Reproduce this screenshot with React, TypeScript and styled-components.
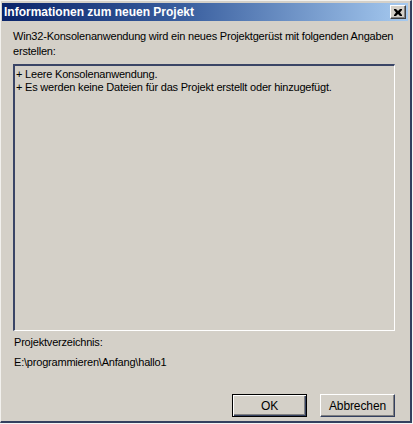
import React from "react";
import styled, { createGlobalStyle } from "styled-components";

const Global = createGlobalStyle`
  html, body { margin: 0; padding: 0; background: #f4f4f4; }
  body { width: 413px; height: 424px; overflow: hidden; }
`;

const Window = styled.div`
  box-sizing: border-box;
  width: 412px;
  height: 423px;
  background: #d4d0c8;
  border-top: 1px solid #f2f1ee;
  border-left: 1px solid #f2f1ee;
  border-right: 2px solid #34405f;
  border-bottom: 2px solid #34405f;
  padding: 2px 2px 0 1px;
  display: flex;
  flex-direction: column;
  font-family: "Liberation Sans", Arial, sans-serif;
  font-size: 11px;
  letter-spacing: -0.2px;
  color: #000;
`;

const TitleBar = styled.div`
  height: 18px;
  display: flex;
  align-items: center;
  justify-content: space-between;
  padding: 0 2px 0 2px;
  background: linear-gradient(to right, #0a246a 0%, #3a5f9f 45%, #a6caf0 100%);
`;

const TitleText = styled.span`
  color: #fff;
  font-weight: bold;
  font-size: 12px;
  letter-spacing: 0;
`;

const CloseButton = styled.div`
  box-sizing: border-box;
  width: 16px;
  height: 14px;
  background: #d4d0c8;
  border-top: 1px solid #fff;
  border-left: 1px solid #fff;
  border-right: 1px solid #404040;
  border-bottom: 1px solid #404040;
  box-shadow: inset -1px -1px 0 #808080;
  display: flex;
  align-items: center;
  justify-content: center;
`;

const Content = styled.div`
  flex: 1;
  display: flex;
  flex-direction: column;
  padding: 8px 13px 0 11px;
`;

const Intro = styled.p`
  margin: 0;
  line-height: 15px;
`;

const InfoBox = styled.div`
  box-sizing: border-box;
  margin-top: 5px;
  width: 382px;
  height: 267px;
  background: #d4d0c8;
  border-top: 2px solid #3a4566;
  border-left: 2px solid #3a4566;
  border-right: 1px solid #fff;
  border-bottom: 1px solid #fff;
  padding: 2px 0 0 1px;
`;

const InfoLine = styled.div`
  line-height: 13px;
`;

const Label = styled.div`
  margin-top: 4px;
  line-height: 15px;
  padding-left: 1px;
`;

const PathText = styled.div`
  margin-top: 5px;
  line-height: 15px;
  padding-left: 1px;
`;

const ButtonRow = styled.div`
  margin-top: auto;
  margin-bottom: 4px;
  display: flex;
  justify-content: flex-end;
  gap: 13px;
`;

const Button = styled.div<{ $default?: boolean }>`
  box-sizing: border-box;
  width: 75px;
  height: 23px;
  display: flex;
  align-items: center;
  justify-content: center;
  background: #d4d0c8;
  border-top: 1px solid ${(p) => (p.$default ? "#000" : "#fff")};
  border-left: 1px solid ${(p) => (p.$default ? "#000" : "#fff")};
  border-right: 1px solid ${(p) => (p.$default ? "#000" : "#34405f")};
  border-bottom: 1px solid ${(p) => (p.$default ? "#000" : "#34405f")};
  box-shadow: ${(p) =>
    p.$default
      ? "inset 1px 1px 0 #fff, inset -1px -1px 0 #34405f, inset -2px -2px 0 #808080"
      : "inset -1px -1px 0 #808080"};
  font-size: 12px;
  letter-spacing: -0.1px;
`;

const Backdrop = styled.div`
  height: 1px;
  background: #f4f4f4;
`;

export default function App() {
  return (
    <>
      <Global />
      <Window>
        <TitleBar>
          <TitleText>Informationen zum neuen Projekt</TitleText>
          <CloseButton>
            <svg width="8" height="7" viewBox="0 0 8 7">
              <path d="M0 0h2l2 2 2-2h2v1L6 3.5 8 6v1H6L4 5 2 7H0V6l2-2.5L0 1z" fill="#000" />
            </svg>
          </CloseButton>
        </TitleBar>
        <Content>
          <Intro>
            Win32-Konsolenanwendung wird ein neues Projektgerüst mit folgenden Angaben erstellen:
          </Intro>
          <InfoBox>
            <InfoLine>+ Leere Konsolenanwendung.</InfoLine>
            <InfoLine>+ Es werden keine Dateien für das Projekt erstellt oder hinzugefügt.</InfoLine>
          </InfoBox>
          <Label>Projektverzeichnis:</Label>
          <PathText>E:\programmieren\Anfang\hallo1</PathText>
          <ButtonRow>
            <Button $default>OK</Button>
            <Button>Abbrechen</Button>
          </ButtonRow>
        </Content>
      </Window>
      <Backdrop />
    </>
  );
}
